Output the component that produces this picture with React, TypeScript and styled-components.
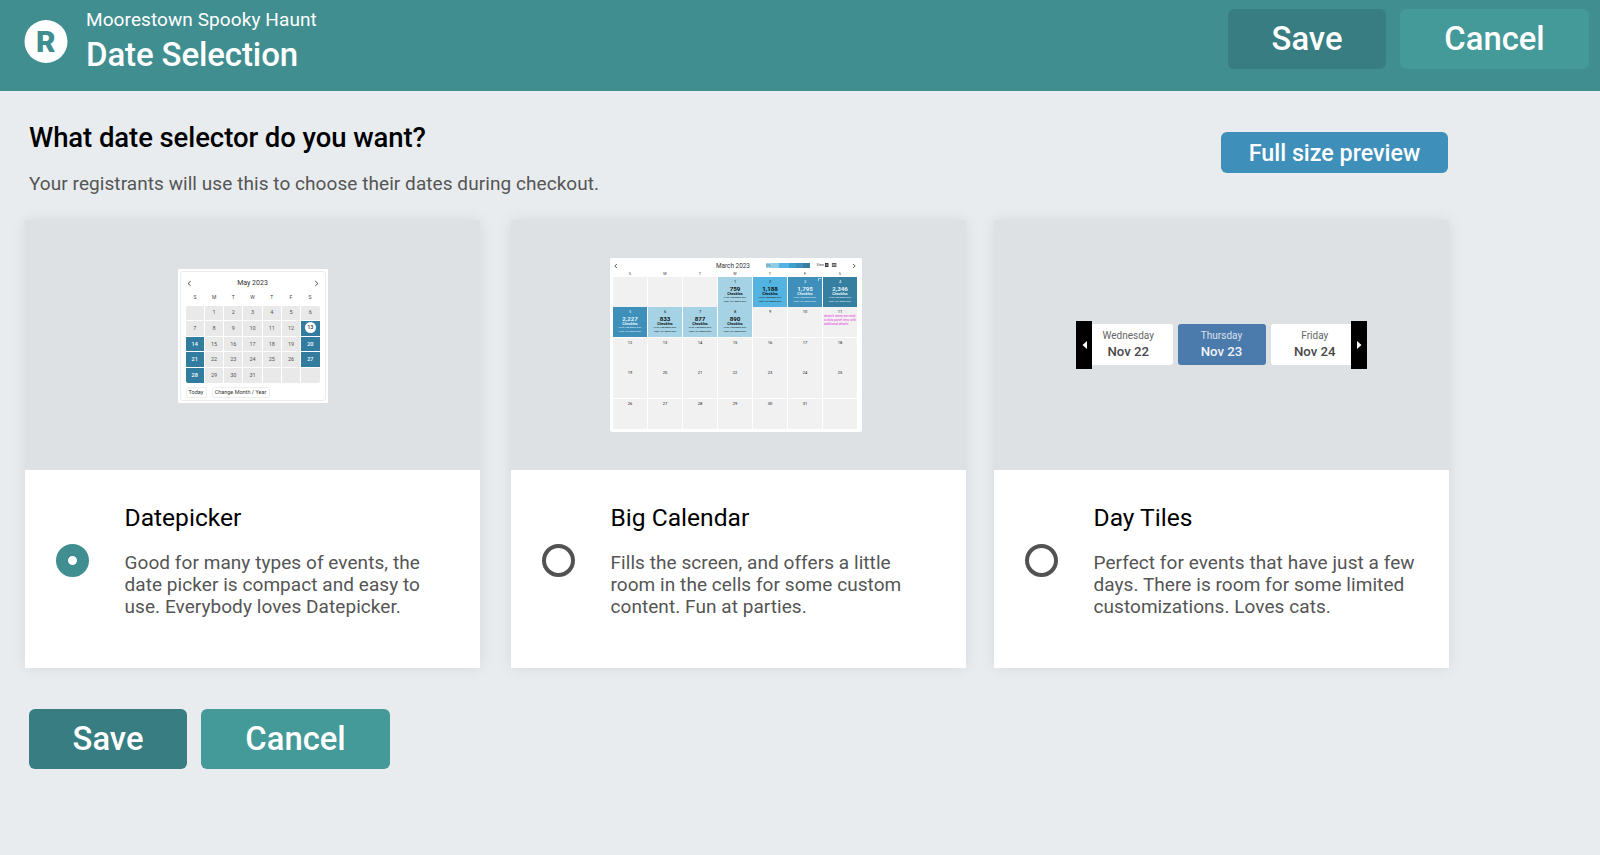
import { useState } from 'react';
import styled, { createGlobalStyle } from 'styled-components';

const WEEK = ['S', 'M', 'T', 'W', 'T', 'F', 'S'];
const SELECTED_DAYS = [13, 14, 20, 21, 27, 28];

const CHECKINS: any = {
  1: { count: '759', tone: 'light' },
  2: { count: '1,188', tone: 'sky' },
  3: { count: '1,795', tone: 'blue' },
  4: { count: '2,346', tone: 'deep' },
  5: { count: '2,227', tone: 'blue' },
  6: { count: '833', tone: 'light' },
  7: { count: '877', tone: 'light' },
  8: { count: '890', tone: 'light' },
};

const TONES: any = {
  light: '#a5d3e5',
  sky: '#53b3e1',
  blue: '#3e8fba',
  deep: '#367fa0',
};

const OPTIONS = [
  {
    id: 'datepicker',
    title: 'Datepicker',
    text: ['Good for many types of events, the', 'date picker is compact and easy to', 'use. Everybody loves Datepicker.'],
  },
  {
    id: 'calendar',
    title: 'Big Calendar',
    text: ['Fills the screen, and offers a little', 'room in the cells for some custom', 'content. Fun at parties.'],
  },
  {
    id: 'tiles',
    title: 'Day Tiles',
    text: ['Perfect for events that have just a few', 'days. There is room for some limited', 'customizations. Loves cats.'],
  },
];

const Chevron = ({ right, size }: { right?: boolean; size: number }) => (
  <svg width={size} height={size} viewBox="0 0 6 6" fill="none" stroke="#444" strokeWidth="0.85">
    <path d={right ? 'M2 1 L4.2 3 L2 5' : 'M4 1 L1.8 3 L4 5'} />
  </svg>
);

const DatepickerPreview = () => {
  const cells = Array.from({ length: 35 }, (_, i) => (i >= 1 && i <= 31 ? i : null));
  return (
    <PickerPaper>
      <PickerFrame>
        <PickerHead>
          <Chevron size={7} />
          <span>May 2023</span>
          <Chevron size={7} right />
        </PickerHead>
        <PickerWeek>
          {WEEK.map((d, i) => (
            <span key={i}>{d}</span>
          ))}
        </PickerWeek>
        <PickerGrid>
          {cells.map((day, i) => (
            <PickerDay key={i} $on={SELECTED_DAYS.includes(day as number)}>
              {day === 13 ? <Today>{day}</Today> : day}
            </PickerDay>
          ))}
        </PickerGrid>
        <PickerFoot>
          <PickerButton $width={21}>Today</PickerButton>
          <PickerButton $width={58}>Change Month / Year</PickerButton>
        </PickerFoot>
      </PickerFrame>
    </PickerPaper>
  );
};

const CalendarPreview = () => {
  const cells = Array.from({ length: 35 }, (_, i) => (i >= 3 && i <= 33 ? i - 2 : null));
  return (
    <CalendarPaper>
      <CalendarHead>
        <Chevron size={6} />
        <CalendarTitle>March 2023</CalendarTitle>
        <Legend>0%</Legend>
        <ViewLabel>View</ViewLabel>
        <ViewIcons width="20" height="6" viewBox="0 0 20 6">
          <path d="M1 1h3.5v4H1z" fill="#333" />
          <path d="M1.7 2.4h2.2M1.7 3.6h2.2" stroke="#fff" strokeWidth="0.4" />
          <path d="M8 1h4.5v4H8z" fill="#555" />
          <path d="M8.5 2.4h3.5M8.5 3.7h3.5" stroke="#fff" strokeWidth="0.5" />
        </ViewIcons>
        <Chevron size={6} right />
      </CalendarHead>
      <CalendarWeek>
        {WEEK.map((d, i) => (
          <span key={i}>{d}</span>
        ))}
      </CalendarWeek>
      <CalendarGrid>
        {cells.map((day, i) => {
          const info = CHECKINS[day as number];
          return (
            <CalendarCell key={i} $tone={info?.tone}>
              <span>{day}</span>
              {info && (
                <>
                  <Count>{info.count}</Count>
                  <Checkins>CheckIns</Checkins>
                  <Times>
                    First 7:00:00am EST
                    <br />
                    Last 4:01:00pm EST
                  </Times>
                </>
              )}
              {day === 3 && <Corner />}
              {day === 11 && (
                <Note>
                  doesn't seem we need
                  <br />
                  a slots panel view with
                  <br />
                  additional details
                </Note>
              )}
            </CalendarCell>
          );
        })}
      </CalendarGrid>
    </CalendarPaper>
  );
};

const TilesPreview = () => (
  <TileStrip>
    <TileArrow>
      <svg width="5" height="8" viewBox="0 0 5 8">
        <path d="M5 0v8L0.5 4z" fill="#fff" />
      </svg>
    </TileArrow>
    <Tile $edge="left">
      <span>Wednesday</span>
      <b>Nov 22</b>
    </Tile>
    <Tile $active>
      <span>Thursday</span>
      <b>Nov 23</b>
    </Tile>
    <Tile $edge="right">
      <span>Friday</span>
      <b>Nov 24</b>
    </Tile>
    <TileArrow>
      <svg width="5" height="8" viewBox="0 0 5 8">
        <path d="M0 0v8L4.5 4z" fill="#fff" />
      </svg>
    </TileArrow>
  </TileStrip>
);

const PREVIEWS: any = {
  datepicker: <DatepickerPreview />,
  calendar: <CalendarPreview />,
  tiles: <TilesPreview />,
};

const App = () => {
  const [selected, setSelected] = useState('datepicker');
  return (
    <>
      <GlobalStyle />
      <Header>
        <Logo width="44" height="43" viewBox="0 0 44 43">
          <circle cx="22" cy="21.5" r="21.5" fill="#fff" />
          <text x="21.7" y="32" textAnchor="middle">
            R
          </text>
        </Logo>
        <HeaderText>
          <EventName>Moorestown Spooky Haunt</EventName>
          <PageTitle>Date Selection</PageTitle>
        </HeaderText>
        <ButtonRow>
          <SaveButton>Save</SaveButton>
          <CancelButton>Cancel</CancelButton>
        </ButtonRow>
      </Header>
      <Main>
        <Intro>
          <div>
            <Question>What date selector do you want?</Question>
            <Hint>Your registrants will use this to choose their dates during checkout.</Hint>
          </div>
          <PreviewButton>Full size preview</PreviewButton>
        </Intro>
        <Cards>
          {OPTIONS.map((option) => (
            <Card key={option.id} onClick={() => setSelected(option.id)}>
              <CardPreview>{PREVIEWS[option.id]}</CardPreview>
              <CardBody>
                <Radio $checked={selected === option.id} />
                <div>
                  <CardTitle>{option.title}</CardTitle>
                  <CardText>
                    {option.text.map((line) => (
                      <span key={line}>{line}</span>
                    ))}
                  </CardText>
                </div>
              </CardBody>
            </Card>
          ))}
        </Cards>
        <FootRow>
          <SaveButton>Save</SaveButton>
          <CancelButton>Cancel</CancelButton>
        </FootRow>
      </Main>
    </>
  );
};

const GlobalStyle = createGlobalStyle`
  * {
    box-sizing: border-box;
  }
  body {
    margin: 0;
    min-height: 100vh;
    background: #e8ecef;
    font-family: Roboto, 'Liberation Sans', sans-serif;
    color: #000;
  }
  h1, h2, h3, p {
    margin: 0;
    font-weight: 400;
    white-space: nowrap;
  }
  button {
    border: none;
    padding: 0;
    font-family: inherit;
    cursor: pointer;
  }
`;
const Header = styled.header`
  display: flex;
  align-items: flex-start;
  height: 91px;
  padding: 9px 11px 0 24px;
  background: #408e8f;
  color: #fff;
`;
const Logo = styled.svg`
  margin: 11px 18px 0 0;
  text {
    font: 900 30px Roboto, sans-serif;
    fill: #408e8f;
  }
`;
const HeaderText = styled.div`
  flex: 1;
`;
const EventName = styled.p`
  font-size: 19px;
  line-height: 21px;
  letter-spacing: 0.09px;
`;
const PageTitle = styled.h1`
  margin-top: 4px;
  font-size: 33px;
  line-height: 41px;
  font-weight: 500;
  letter-spacing: -0.12px;
`;
const ButtonRow = styled.div`
  display: flex;
  gap: 14px;
`;
const BigButton = styled.button`
  height: 60px;
  padding-bottom: 1px;
  border-radius: 6px;
  font-size: 32.8px;
  font-weight: 500;
  color: #fff;
`;
const SaveButton = styled(BigButton)`
  width: 158px;
  background: #377d81;
`;
const CancelButton = styled(BigButton)`
  width: 189px;
  background: #449999;
`;
const Main = styled.main`
  padding: 29px 0 0 25px;
`;
const Intro = styled.div`
  display: flex;
  justify-content: space-between;
  width: 1423px;
  height: 100px;
  padding-left: 4px;
`;
const Question = styled.h2`
  font-size: 27.5px;
  line-height: 36px;
  font-weight: 500;
  letter-spacing: -0.08px;
`;
const Hint = styled.p`
  margin-top: 17px;
  font-size: 19px;
  line-height: 22px;
  letter-spacing: 0.065px;
  color: #555;
`;
const PreviewButton = styled.button`
  width: 227px;
  height: 41px;
  margin-top: 12px;
  border-radius: 6px;
  background: #3e8fba;
  font-size: 23.3px;
  font-weight: 500;
  color: #fff;
`;
const Cards = styled.div`
  display: flex;
  width: 1424px;
  justify-content: space-between;
`;
const Card = styled.section`
  width: 455px;
  box-shadow: 0 0 14px rgba(0, 0, 0, 0.08);
  cursor: pointer;
  &:nth-child(2) {
    margin-left: 3px;
  }
`;
const CardPreview = styled.div`
  display: flex;
  justify-content: center;
  align-items: center;
  height: 250px;
  background: #dde1e4;
`;
const CardBody = styled.div`
  display: flex;
  height: 198px;
  padding: 33px 0 0 31px;
  background: #fff;
`;
const Radio = styled.span<{ $checked: boolean }>`
  width: 33px;
  height: 33px;
  margin: 41px 35.5px 0 0;
  border: ${({ $checked }) => ($checked ? '12px solid #408e8f' : '4px solid #525252')};
  border-radius: 50%;
`;
const CardTitle = styled.h3`
  font-size: 24.6px;
  line-height: 29px;
`;
const CardText = styled.p`
  display: flex;
  flex-direction: column;
  margin-top: 20px;
  font-size: 19px;
  line-height: 22px;
  letter-spacing: 0.06px;
  color: #555;
`;
const FootRow = styled(ButtonRow)`
  margin: 41px 0 0 4px;
`;

/* Datepicker */
const PickerPaper = styled.div`
  width: 150px;
  height: 134px;
  margin-top: -18px;
  padding: 2px;
  background: #fff;
`;
const PickerFrame = styled.div`
  height: 130px;
  padding: 5px 5px 0;
  border: 1px solid #ececec;
  border-radius: 3px;
`;
const PickerHead = styled.div`
  display: flex;
  justify-content: space-between;
  align-items: center;
  height: 12px;
  font-size: 7px;
  color: #333;
`;
const PickerWeek = styled.div`
  display: grid;
  grid-template-columns: repeat(7, 1fr);
  height: 16.5px;
  font-size: 5px;
  line-height: 17px;
  text-align: center;
  color: #444;
`;
const PickerGrid = styled.div`
  display: grid;
  grid-template-columns: repeat(7, 1fr);
  grid-auto-rows: 14.8px;
  gap: 0.8px;
  overflow: hidden;
  border-radius: 2px;
`;
const PickerDay = styled.div<{ $on: boolean }>`
  display: flex;
  justify-content: center;
  align-items: center;
  padding-bottom: 1px;
  background: ${({ $on }) => ($on ? '#327d9f' : '#e9e9e9')};
  color: ${({ $on }) => ($on ? '#fff' : '#555')};
  font-size: 5.5px;
  font-weight: ${({ $on }) => ($on ? 500 : 400)};
`;
const Today = styled.span`
  width: 11px;
  height: 11px;
  border-radius: 50%;
  background: #fff;
  color: #333;
  line-height: 11px;
  text-align: center;
`;
const PickerFoot = styled.div`
  display: flex;
  gap: 5px;
  margin-top: 4px;
`;
const PickerButton = styled.span<{ $width: number }>`
  width: ${({ $width }) => $width}px;
  height: 11px;
  border: 1px solid #eee;
  border-radius: 2px;
  font-size: 5.5px;
  line-height: 9px;
  text-align: center;
  white-space: nowrap;
  color: #333;
`;

/* Big calendar */
const CalendarPaper = styled.div`
  width: 252px;
  height: 174px;
  margin-right: 5px;
  padding: 3px 5px 0 3px;
  border-radius: 2px;
  background: #fff;
`;
const CalendarHead = styled.div`
  display: flex;
  align-items: center;
  height: 10px;
`;
const CalendarTitle = styled.span`
  width: 34px;
  margin-left: 97px;
  font-size: 6.4px;
  white-space: nowrap;
  color: #333;
`;
const Legend = styled.span`
  width: 45px;
  height: 5px;
  margin: 0 0 2px 16px;
  background: linear-gradient(90deg, #a5d3e5 0 14%, #8acbe6 14% 30%, #53b3e1 30% 52%, #3e9fcf 52% 68%, #3e8fba 68% 84%, #367fa0 84%);
  font-size: 4px;
  line-height: 5px;
  color: #367fa0;
`;
const ViewLabel = styled.span`
  width: 8px;
  margin: 0 0 2px 6px;
  font-size: 3.5px;
  color: #444;
`;
const ViewIcons = styled.svg`
  margin: 0 7px 2px 0;
`;
const CalendarWeek = styled.div`
  display: grid;
  grid-template-columns: repeat(7, 34px);
  column-gap: 1px;
  height: 6px;
  font-size: 3.8px;
  line-height: 5px;
  text-align: center;
  color: #333;
`;
const CalendarGrid = styled.div`
  display: grid;
  grid-template-columns: repeat(7, 34px);
  grid-auto-rows: 29.7px;
  gap: 0.8px 1px;
`;
const CalendarCell = styled.div<{ $tone?: string }>`
  position: relative;
  display: flex;
  flex-direction: column;
  align-items: center;
  min-width: 0;
  padding-top: 2px;
  background: ${({ $tone }) => ($tone ? TONES[$tone] : '#f1f1f1')};
  color: ${({ $tone }) => ($tone === 'blue' || $tone === 'deep' ? '#e3f3fa' : '#111')};
  font-size: 4px;
  line-height: 5px;
`;
const Corner = styled.i`
  position: absolute;
  top: 1px;
  right: 1px;
  width: 3px;
  height: 3px;
  border-top: 1px solid #a5d3e5;
  border-left: 1px solid #a5d3e5;
`;
const Count = styled.b`
  margin-top: 2px;
  font-size: 6.2px;
  line-height: 6px;
`;
const Checkins = styled.span`
  font-size: 3.7px;
  font-weight: 700;
  line-height: 4px;
`;
const Times = styled.span`
  font-size: 2.5px;
  line-height: 4px;
  text-align: center;
  white-space: nowrap;
`;
const Note = styled.span`
  font-size: 3.2px;
  line-height: 4px;
  white-space: nowrap;
  color: #e838e0;
`;

/* Day tiles */
const TileStrip = styled.div`
  display: flex;
  align-items: center;
  gap: 5px;
`;
const TileArrow = styled.div`
  display: flex;
  justify-content: center;
  align-items: center;
  width: 16px;
  height: 48px;
  background: #000;
  &:first-child {
    margin-right: -5px;
  }
  &:last-child {
    margin-left: -5px;
  }
`;
const Tile = styled.div<{ $active?: boolean; $edge?: string }>`
  width: ${({ $active }) => ($active ? 88 : 80.5)}px;
  height: 41px;
  margin-bottom: 1px;
  padding: ${({ $edge }) => ($edge === 'left' ? '4px 8px 0 0' : $edge === 'right' ? '4px 0 0 8px' : '4px 0 0')};
  border-radius: ${({ $edge }) => ($edge === 'left' ? '0 3px 3px 0' : $edge === 'right' ? '3px 0 0 3px' : '3px')};
  background: ${({ $active }) => ($active ? '#4b7aad' : '#fff')};
  color: ${({ $active }) => ($active ? '#f0f4f9' : '#484848')};
  text-align: center;
  span {
    display: block;
    font-size: 10px;
    line-height: 15px;
    opacity: 0.85;
  }
  b {
    display: block;
    font-size: 13.2px;
    line-height: 18px;
    font-weight: 500;
  }
`;

export default App;
